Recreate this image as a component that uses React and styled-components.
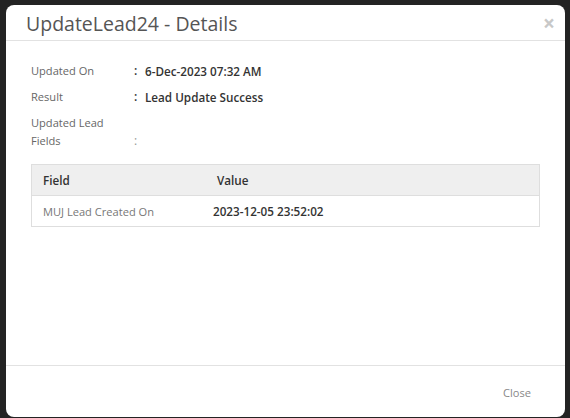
import React from "react";
import styled, { createGlobalStyle } from "styled-components";

const Global = createGlobalStyle`
  html, body {
    margin: 0;
    padding: 0;
    background: #232323;
  }
  body {
    font-family: "Open Sans", "Noto Sans", sans-serif;
  }
`;

const Backdrop = styled.div`
  width: 570px;
  height: 418px;
  padding: 5px 5px 1px 6px;
  box-sizing: border-box;
  background: #232323;
`;

const Modal = styled.div`
  height: 100%;
  background: #fff;
  border-radius: 8px;
  display: flex;
  flex-direction: column;
  overflow: hidden;
`;

const Header = styled.div`
  display: flex;
  align-items: center;
  justify-content: space-between;
  height: 35px;
  padding: 0 10px 0 20px;
  border-bottom: 1px solid #e2e2e2;
`;

const Title = styled.h3`
  margin: 0;
  font-size: 19.5px;
  font-weight: 500;
  color: #555;
  margin-top: 1px;
`;

const CloseX = styled.span`
  font-size: 21px;
  font-weight: 700;
  color: #c8c8c8;
  line-height: 1;
  margin-top: 1px;
`;

const Body = styled.div`
  flex: 1;
  padding: 21px 25px 0 25px;
`;

const InfoList = styled.div`
  display: flex;
  flex-direction: column;
  gap: 8px;
`;

const InfoRow = styled.div`
  display: grid;
  grid-template-columns: 103px 11px 1fr;
  align-items: end;
  line-height: 18px;
`;

const Label = styled.div`
  color: #666;
  font-size: 11.1px;
  width: 76px;
`;

const Colon = styled.div`
  color: ${(p) => (p.$light ? "#999" : "#333")};
  font-size: 12px;
  font-weight: ${(p) => (p.$light ? 400 : 600)};
`;

const Value = styled.div`
  color: #333;
  font-size: 11.7px;
  font-weight: 600;
`;

const Table = styled.table`
  width: 509px;
  margin: 14px 0 0 0;
  border-collapse: collapse;
  border: 1px solid #dedede;
`;

const Th = styled.th`
  text-align: left;
  font-size: 11.7px;
  font-weight: 600;
  color: #333;
  background: #efefef;
  height: 30px;
  padding: 0 0 0 11px;
  width: ${(p) => p.$w || "auto"};
  border-bottom: 1px solid #dedede;
`;

const Td = styled.td`
  height: 30px;
  padding: 0 0 0 ${(p) => p.$pad || "11px"};
  color: ${(p) => (p.$strong ? "#333" : "#777")};
  font-size: ${(p) => (p.$strong ? "11.7px" : "11.1px")};
  font-weight: ${(p) => (p.$strong ? 600 : 400)};
`;

const Footer = styled.div`
  height: 51px;
  border-top: 1px solid #e2e2e2;
  display: flex;
  align-items: center;
  justify-content: flex-end;
  padding: 0 34px 0 0;
`;

const CloseButton = styled.button`
  border: none;
  background: none;
  font-family: inherit;
  font-size: 11.1px;
  color: #888;
  padding: 0;
  margin-top: 2px;
`;

export default function App() {
  return (
    <>
      <Global />
      <Backdrop>
        <Modal>
          <Header>
            <Title>UpdateLead24 - Details</Title>
            <CloseX>×</CloseX>
          </Header>
          <Body>
            <InfoList>
              <InfoRow>
                <Label>Updated On</Label>
                <Colon>:</Colon>
                <Value>6-Dec-2023 07:32 AM</Value>
              </InfoRow>
              <InfoRow>
                <Label>Result</Label>
                <Colon>:</Colon>
                <Value>Lead Update Success</Value>
              </InfoRow>
              <InfoRow>
                <Label>Updated Lead Fields</Label>
                <Colon $light>:</Colon>
                <Value />
              </InfoRow>
            </InfoList>
            <Table>
              <thead>
                <tr>
                  <Th $w="163px">Field</Th>
                  <Th>Value</Th>
                </tr>
              </thead>
              <tbody>
                <tr>
                  <Td>MUJ Lead Created On</Td>
                  <Td $strong $pad="7px">2023-12-05 23:52:02</Td>
                </tr>
              </tbody>
            </Table>
          </Body>
          <Footer>
            <CloseButton>Close</CloseButton>
          </Footer>
        </Modal>
      </Backdrop>
    </>
  );
}
